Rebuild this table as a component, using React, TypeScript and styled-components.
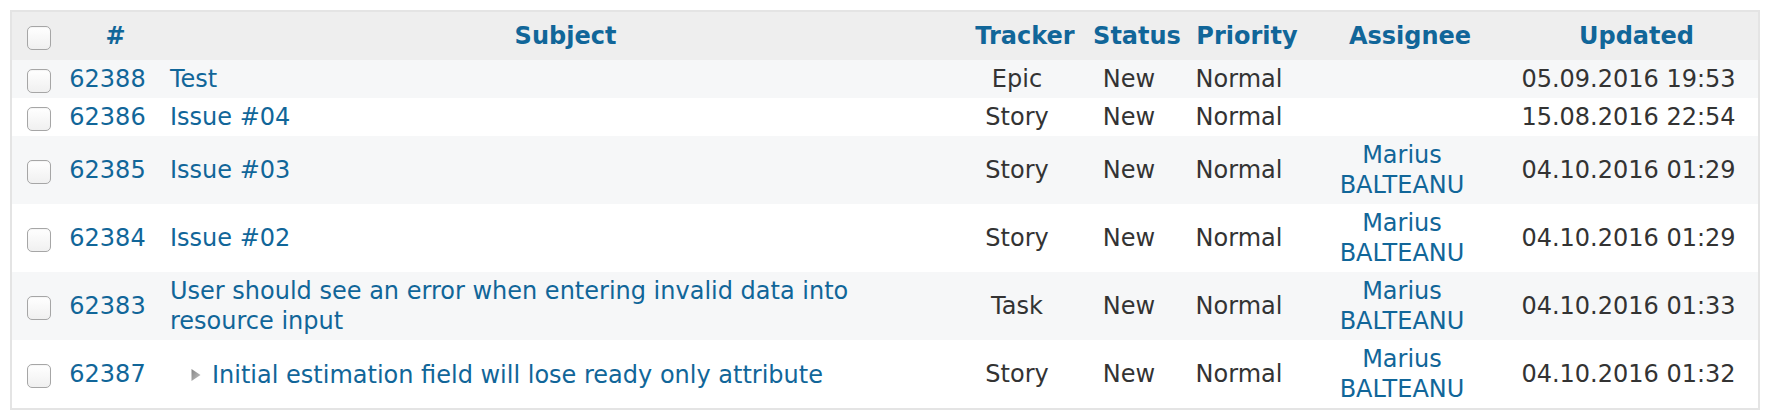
import React from "react";
import styled, { createGlobalStyle } from "styled-components";

interface Issue {
  id: number;
  subject: string;
  tracker: string;
  status: string;
  priority: string;
  assignee?: string;
  updated: string;
  child?: boolean;
}

const issues: Issue[] = [
  { id: 62388, subject: "Test", tracker: "Epic", status: "New", priority: "Normal", updated: "05.09.2016 19:53" },
  { id: 62386, subject: "Issue #04", tracker: "Story", status: "New", priority: "Normal", updated: "15.08.2016 22:54" },
  { id: 62385, subject: "Issue #03", tracker: "Story", status: "New", priority: "Normal", assignee: "Marius BALTEANU", updated: "04.10.2016 01:29" },
  { id: 62384, subject: "Issue #02", tracker: "Story", status: "New", priority: "Normal", assignee: "Marius BALTEANU", updated: "04.10.2016 01:29" },
  {
    id: 62383,
    subject: "User should see an error when entering invalid data into resource input",
    tracker: "Task",
    status: "New",
    priority: "Normal",
    assignee: "Marius BALTEANU",
    updated: "04.10.2016 01:33",
  },
  {
    id: 62387,
    subject: "Initial estimation field will lose ready only attribute",
    tracker: "Story",
    status: "New",
    priority: "Normal",
    assignee: "Marius BALTEANU",
    updated: "04.10.2016 01:32",
    child: true,
  },
];

const columns = [53, 101, 799, 120, 104, 116, 210, 243];

const headers = ["#", "Subject", "Tracker", "Status", "Priority", "Assignee", "Updated"];

export default function App() {
  return (
    <>
      <GlobalStyle />
      <Page>
        <IssueTable>
          <colgroup>
            {columns.map((width, index) => (
              <Col key={index} $width={width} />
            ))}
          </colgroup>
          <thead>
            <HeaderRow>
              <HeaderCell>
                <Checkbox />
              </HeaderCell>
              {headers.map((title) => (
                <HeaderCell key={title}>{title}</HeaderCell>
              ))}
            </HeaderRow>
          </thead>
          <tbody>
            {issues.map((issue, index) => (
              <Row key={issue.id} $odd={index % 2 === 0}>
                <CheckboxCell>
                  <Checkbox />
                </CheckboxCell>
                <Cell>
                  <Link href="#">{issue.id}</Link>
                </Cell>
                <Cell $align="left">
                  {issue.child ? (
                    <ChildSubject>
                      <Arrow width="12" height="14" viewBox="0 0 12 14">
                        <defs>
                          <linearGradient id="arrowFill" x1="0" y1="0" x2="1" y2="1">
                            <stop offset="0" stopColor="#858585" />
                            <stop offset="1" stopColor="#c2c2c2" />
                          </linearGradient>
                        </defs>
                        <polygon points="1.5,1 10.5,7 1.5,13" fill="url(#arrowFill)" />
                      </Arrow>
                      <Link href="#">{issue.subject}</Link>
                    </ChildSubject>
                  ) : (
                    <Link href="#">{issue.subject}</Link>
                  )}
                </Cell>
                <Cell>{issue.tracker}</Cell>
                <Cell>{issue.status}</Cell>
                <Cell>{issue.priority}</Cell>
                <Cell>{issue.assignee && <Link href="#">{issue.assignee}</Link>}</Cell>
                <Cell>{issue.updated}</Cell>
              </Row>
            ))}
          </tbody>
        </IssueTable>
      </Page>
    </>
  );
}

const GlobalStyle = createGlobalStyle`
  body {
    margin: 0;
    background: #ffffff;
    font-family: Verdana, "DejaVu Sans", sans-serif;
    color: #333333;
  }
`;

const Page = styled.div`
  padding: 10px;
`;

const IssueTable = styled.table`
  width: 1750px;
  table-layout: fixed;
  border-collapse: separate;
  border-spacing: 0;
  border: 2px solid #e4e4e4;
  font-size: 24px;
  line-height: 30px;
`;

const Col = styled.col<{ $width: number }>`
  width: ${(props) => props.$width}px;
`;

const HeaderRow = styled.tr`
  height: 48px;
  background-color: #eeeeee;
`;

const HeaderCell = styled.th`
  padding: 0;
  text-align: center;
  vertical-align: middle;
  white-space: nowrap;
  font-weight: bold;
  color: #116699;
`;

const Row = styled.tr<{ $odd: boolean }>`
  background-color: ${(props) => (props.$odd ? "#f6f7f8" : "#ffffff")};
`;

const Cell = styled.td<{ $align?: "left" | "center" }>`
  padding: 4px 18px 4px ${(props) => (props.$align === "left" ? "4px" : "2px")};
  text-align: ${(props) => props.$align ?? "center"};
  vertical-align: middle;
`;

const CheckboxCell = styled.td`
  padding: 0;
  vertical-align: middle;
`;

const Checkbox = styled.input.attrs({ type: "checkbox" })`
  appearance: none;
  display: block;
  box-sizing: border-box;
  width: 24px;
  height: 24px;
  margin: 4px auto 0;
  border: 1px solid #a6a6a6;
  border-radius: 5px;
  background: linear-gradient(#ffffff, #f0f0f0);
  box-shadow: inset 0 1px 1px rgba(0, 0, 0, 0.04);
`;

const Link = styled.a`
  color: #116699;
  text-decoration: none;
`;

const ChildSubject = styled.span`
  display: inline-flex;
  align-items: center;
  padding-left: 20px;
`;

const Arrow = styled.svg`
  flex: none;
  margin-right: 10px;
`;
